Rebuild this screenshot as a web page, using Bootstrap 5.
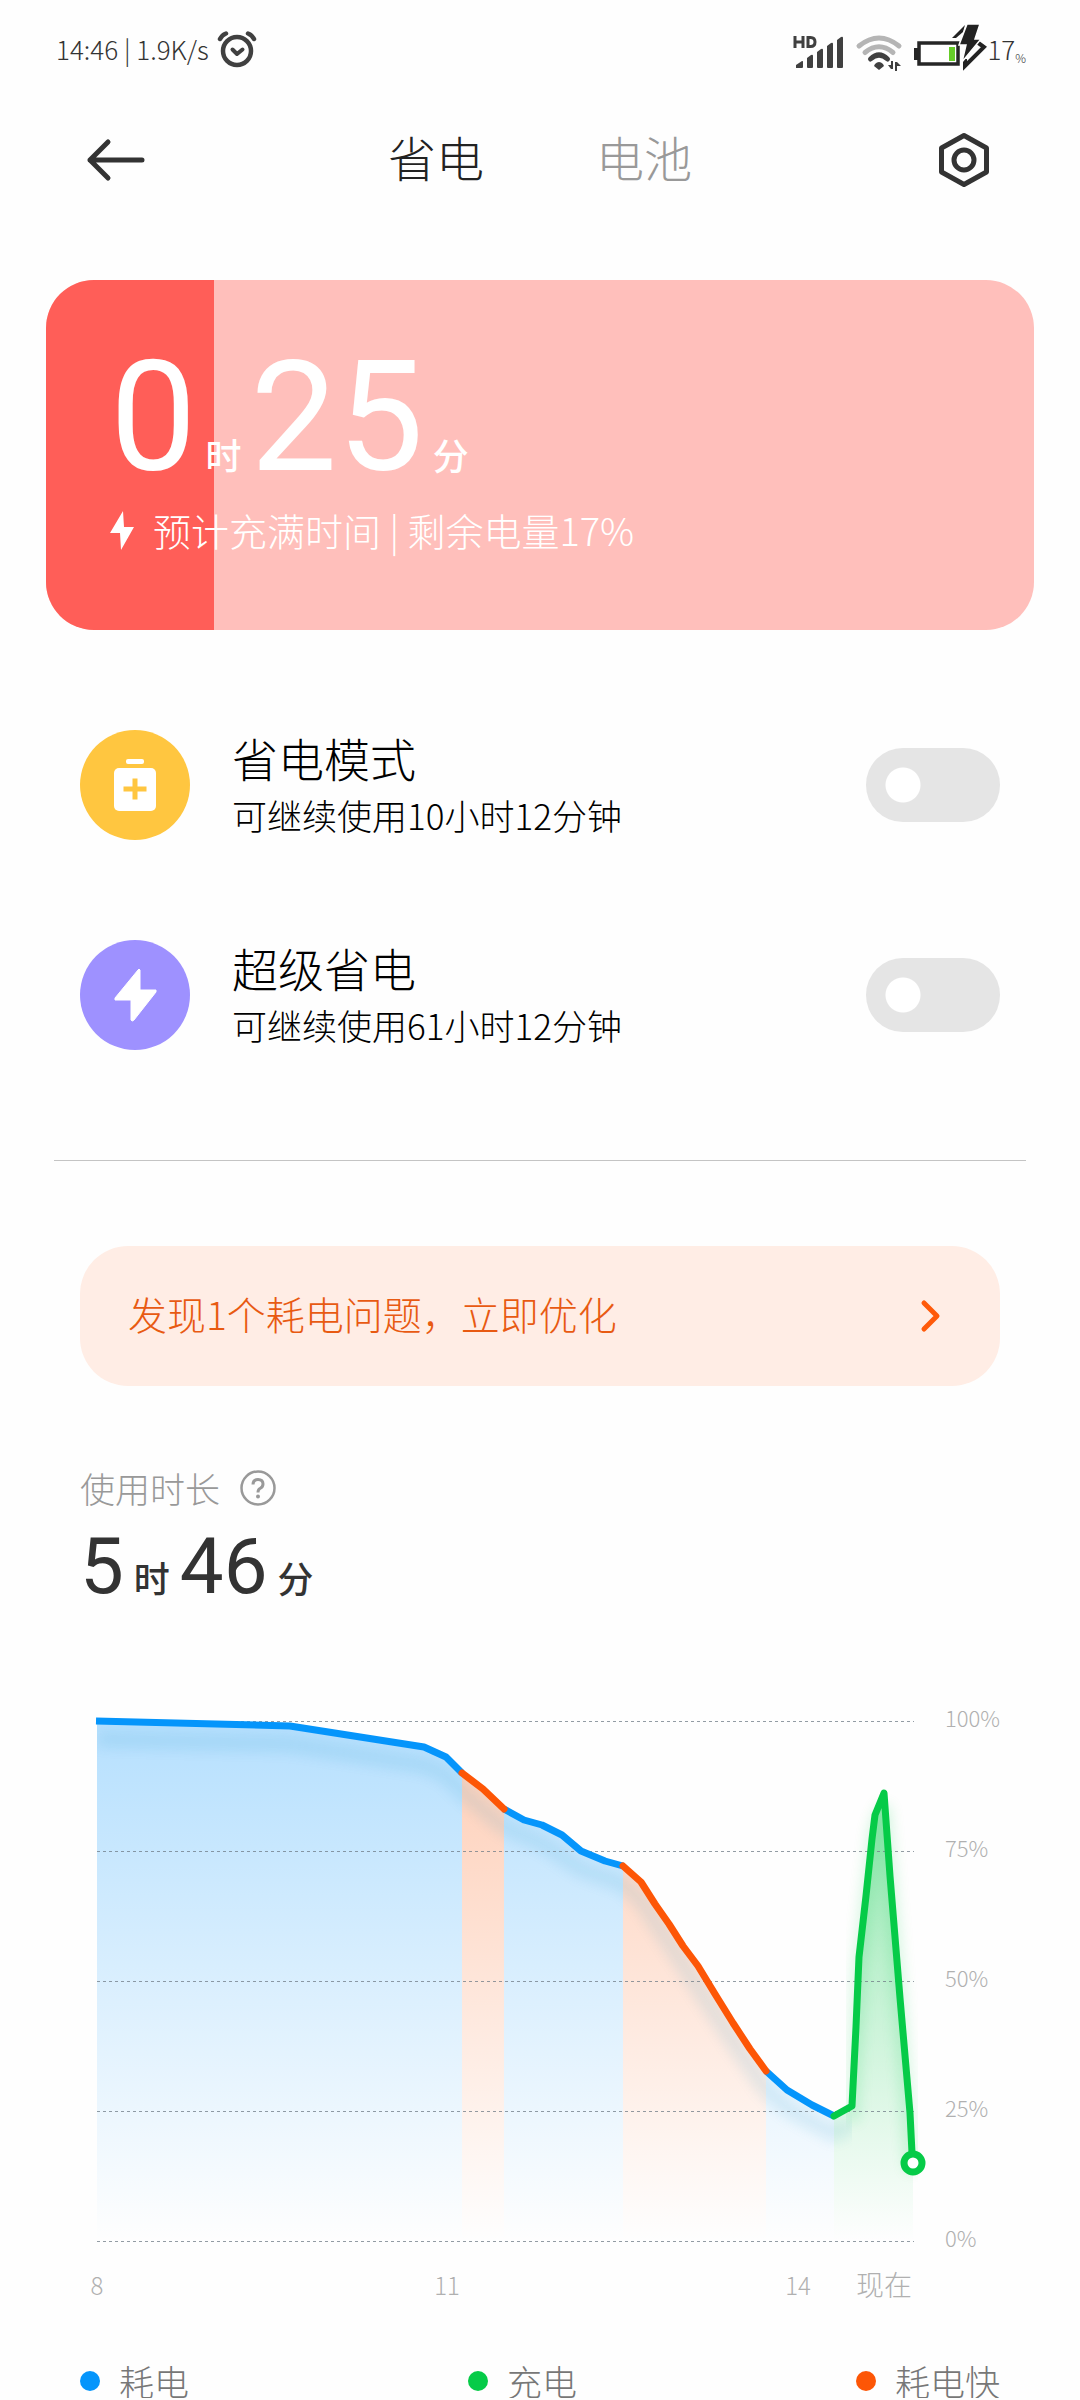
<!DOCTYPE html>
<html lang="zh-CN">
<head>
<meta charset="utf-8">
<meta name="viewport" content="width=device-width, initial-scale=1">
<title>省电</title>
<link rel="stylesheet" href="https://cdn.jsdelivr.net/npm/bootstrap@5.3.0/dist/css/bootstrap.min.css">
<style>
  body { font-family: "Noto Sans CJK SC", sans-serif; font-weight: 300; color: #111; background: #fefefe; }
  svg { display: block; flex: none; }
  .statusbar { height: 98px; padding: 0 54px 0 56px; font-size: 26px; line-height: 36px; color: #333; }
  .pct { font-size: 12px; }
  .topbar { height: 124px; padding: 0 80px; }
  .icon-btn { width: 72px; height: 72px; }
  .tabs-main { gap: 112px; font-size: 48px; line-height: 64px; padding-bottom: 8px; }
  .tabs-main a { color: #999; text-decoration: none; }
  .tabs-main a.active { color: #222; }
  .power-card { margin: 58px 46px 0; height: 350px; border-radius: 48px; background: #ffbfbb; color: #fff; }
  .power-level { background: #ff5e58; }
  .power-text { padding: 58px 64px 0; }
  .digits { font-family: Roboto, sans-serif; font-weight: 400; }
  .unit { font-size: 36px; line-height: 36px; font-weight: 500; }
  .big-time { line-height: 160px; gap: 9px; }
  .big-time .digits { font-size: 154px; }
  .power-note { font-size: 38px; line-height: 56px; gap: 19px; margin-top: 4px; }
  .mode-list { margin-top: 50px; padding: 0 80px; }
  .mode-row { height: 210px; gap: 42px; }
  .mode-icon { width: 110px; height: 110px; }
  .mode-title { font-size: 46px; line-height: 60px; color: #000; }
  .mode-sub { font-size: 35px; line-height: 56px; color: #000; }
  .form-switch .form-check-input.big-switch { width: 134px; height: 74px; margin: 0; border: 0; border-radius: 37px;
    background-color: #e5e5e5; background-image: radial-gradient(circle at 37px 37px, #fff 17px, transparent 18px);
    background-size: 100% 100%; background-position: 0 0; }
  .form-switch .form-check-input.big-switch:checked { background-color: #0d99ff;
    background-image: radial-gradient(circle at 97px 37px, #fff 17px, transparent 18px); }
  .split { margin: 60px 54px 0; border-top: 1px solid #c4c4c4; opacity: 1; }
  .tip { margin: 85px 80px 0; height: 140px; padding: 0 48px; border-radius: 48px; background: #ffede5;
    color: #e85a12; font-size: 39px; text-decoration: none; }
  .tip span { padding-bottom: 6px; }
  .usage { margin: 78px 80px 0; }
  .usage-title { font-size: 35px; line-height: 48px; gap: 20px; color: #999; }
  .usage-time { line-height: 80px; gap: 10px; margin-top: 15px; color: #333; }
  .usage-time .digits { font-size: 78px; }
  .chart { margin: 94px 80px 0; }
  .chart svg { width: 100%; height: auto; overflow: visible; }
  .chart text { font-size: 24px; fill: #b0b0b0; }
  .chart .level text { font-size: 22px; }
  .legend-row { margin: 43px 80px 0; font-size: 35px; line-height: 34px; color: #777; }
  .legend-row > div { gap: 19px; }
  .dot { width: 20px; height: 20px; }
</style>
<script src="https://cdn.jsdelivr.net/npm/bootstrap@5.3.0/dist/js/bootstrap.bundle.min.js"></script>
</head>
<body>
<div class="statusbar d-flex justify-content-between align-items-center">
  <div class="d-flex align-items-center">
    <span>14:46 | 1.9K/s</span>
    <svg class="ms-2" width="40" height="40" viewBox="0 0 40 40" fill="none" stroke="#404040" stroke-linecap="round" stroke-linejoin="round">
      <circle cx="20" cy="22" r="14" stroke-width="4.5"/><path d="M15.500 20.500l4.500 4.500 5.500-4.500" stroke-width="4"/>
      <path d="M3 10Q5 6 9 4.500M31 4.500Q35 6 37 10" stroke-width="4.500"/>
    </svg>
  </div>
  <div class="d-flex align-items-center">
    <svg width="194" height="54" viewBox="0 0 194 54">
      <path d="M2 14v12M10 14v12M2 20h8M15 15.500v9h2.500q4.500 0 4.500-4.500t-4.500-4.500z" fill="none" stroke="#404040" stroke-width="3"/>
      <g fill="#404040"><path d="M3 46v-3l6-4q1-.5 1 1v5q0 1-1 1zM14 45V36l4-3q2-1 2 1v11q0 1-1 1h-4q-1 0-1-1zM24 45V30l4-3q2-1 2 1v17q0 1-1 1h-4q-1 0-1-1zM34 45V24l4-3q2-1 2 1v23q0 1-1 1h-4q-1 0-1-1zM44 45V18l4-3q2-1 2 1v29q0 1-1 1h-4q-1 0-1-1z"/></g>
      <path d="M66 24Q86 8 106 24M72 30.500Q86 19 100 30.500" fill="none" stroke="#b5b5b5" stroke-width="5" stroke-linecap="round"/>
      <path d="M77.500 37Q86 29 94.500 37" fill="none" stroke="#404040" stroke-width="5" stroke-linecap="round"/>
      <path d="M82 42q4-4 8 0l1 2-5 4-5-4z" fill="#404040"/>
      <path d="M100 39v8h-2l-3-4h3v-4zM102 49v-9h2l4 4h-4v5z" fill="#404040"/>
      <rect x="126" y="21" width="39" height="21" fill="#fff" stroke="#262626" stroke-width="3.500"/>
      <rect x="121" y="26" width="4" height="12" fill="#262626"/><rect x="156" y="25" width="6" height="14" fill="#66cc29"/>
      <path d="M184 20l7 5-19 19v-7" fill="none" stroke="#222" stroke-width="4"/>
      <path d="M159 16l13-13-2 7-7 6z" fill="#222"/>
      <path d="M174 2h13l-5 15h6L169 40l4-17h-7z" fill="#222" stroke="#fff" stroke-width="1.500"/>
    </svg>
    <span>17</span><span class="pct align-self-end">%</span>
  </div>
</div>

<header class="topbar d-flex justify-content-between align-items-center">
  <button type="button" class="btn icon-btn p-0 border-0 d-flex align-items-center justify-content-center" aria-label="返回">
    <svg width="60" height="44" viewBox="0 0 60 44" fill="none" stroke="#333" stroke-width="5" stroke-linecap="round" stroke-linejoin="round"><path d="M56 22H4M22 4L4 22l18 18"/></svg>
  </button>
  <nav class="tabs-main d-flex"><a href="#" class="active">省电</a><a href="#">电池</a></nav>
  <button type="button" class="btn icon-btn p-0 border-0 d-flex align-items-center justify-content-center" aria-label="设置">
    <svg width="54" height="56" viewBox="0 0 54 56" fill="none" stroke="#333" stroke-width="5" stroke-linejoin="round"><path d="M27 3.500L49.500 16v24L27 52.500 4.500 40V16z"/><circle cx="27" cy="28" r="10"/></svg>
  </button>
</header>

<main>
  <section class="power-card position-relative overflow-hidden">
    <div class="power-level position-absolute top-0 start-0 h-100" style="width:17%"></div>
    <div class="power-text position-relative">
      <div class="big-time d-flex align-items-baseline">
        <span class="digits">0</span><span class="unit">时</span><span class="digits">25</span><span class="unit">分</span>
      </div>
      <div class="power-note d-flex align-items-center">
        <svg width="24" height="40" viewBox="0 0 24 40"><path d="M13 1L0 23h10l1 17 13-23H14z" fill="#fff"/></svg>
        <span>预计充满时间 | 剩余电量17%</span>
      </div>
    </div>
  </section>

  <section class="mode-list">
    <div class="mode-row d-flex align-items-center">
      <svg class="mode-icon" viewBox="0 0 110 110"><circle cx="55" cy="55" r="55" fill="#ffc640"/><rect x="46" y="29" width="18" height="5" rx="2" fill="#fff"/><rect x="34" y="38" width="42" height="43" rx="5" fill="#fff"/><path d="M55 48.500v21M43.500 59h23" stroke="#ffc640" stroke-width="5"/></svg>
      <label class="flex-grow-1" for="saver"><span class="mode-title d-block">省电模式</span><span class="mode-sub d-block">可继续使用10小时12分钟</span></label>
      <div class="form-check form-switch p-0 m-0"><input class="form-check-input big-switch float-none d-block" type="checkbox" role="switch" id="saver"></div>
    </div>
    <div class="mode-row d-flex align-items-center">
      <svg class="mode-icon" viewBox="0 0 110 110"><circle cx="55" cy="55" r="55" fill="#9e91ff"/><path d="M58 30L35 58v2h16v20q1 2 3 0l22-28v-2H60V30q-1-2-2 0z" fill="#fff" stroke="#fff" stroke-linejoin="round"/></svg>
      <label class="flex-grow-1" for="ultra"><span class="mode-title d-block">超级省电</span><span class="mode-sub d-block">可继续使用61小时12分钟</span></label>
      <div class="form-check form-switch p-0 m-0"><input class="form-check-input big-switch float-none d-block" type="checkbox" role="switch" id="ultra"></div>
    </div>
  </section>

  <hr class="split">

  <a href="#" class="tip d-flex justify-content-between align-items-center">
    <span>发现1个耗电问题，立即优化</span>
    <svg width="44" height="34" viewBox="0 0 44 34" fill="none" stroke="#ff5a0a" stroke-width="5" stroke-linecap="round" stroke-linejoin="round"><path d="M16 4l13 13-13 13"/></svg>
  </a>

  <section class="usage">
    <div class="usage-title d-flex align-items-center">
      <span>使用时长</span>
      <svg width="36" height="36" viewBox="0 0 36 36" fill="none" stroke="#999" stroke-width="2.500"><circle cx="18" cy="18" r="16.500"/><path d="M13 14.500q0-5 5-5t5 4.500q0 3-3 4.500-2 1-2 4" stroke-width="3"/><circle cx="18" cy="26.500" r="2" fill="#999" stroke="none"/></svg>
    </div>
    <div class="usage-time d-flex align-items-baseline">
      <span class="digits">5</span><span class="unit">时</span><span class="digits">46</span><span class="unit">分</span>
    </div>
  </section>

  <section class="chart">
    <svg viewBox="0 0 920 620" role="img" aria-label="电量曲线">
      <defs>
        <linearGradient id="gb" gradientUnits="userSpaceOnUse" x1="0" y1="0" x2="0" y2="520"><stop offset="0" stop-color="#0d99ff" stop-opacity=".3"/><stop offset="1" stop-color="#0d99ff" stop-opacity="0"/></linearGradient>
        <linearGradient id="go" gradientUnits="userSpaceOnUse" x1="0" y1="0" x2="0" y2="520"><stop offset="0" stop-color="#ff5a0a" stop-opacity=".3"/><stop offset="1" stop-color="#ff5a0a" stop-opacity="0"/></linearGradient>
        <linearGradient id="gg" gradientUnits="userSpaceOnUse" x1="0" y1="72" x2="0" y2="520"><stop offset="0" stop-color="#06cb48" stop-opacity=".42"/><stop offset="1" stop-color="#06cb48" stop-opacity="0"/></linearGradient>
        <filter id="soft" x="-10%" y="-10%" width="120%" height="130%"><feGaussianBlur stdDeviation="7"/></filter>
        <clipPath id="under"><path d="M0 0L193 5 327 26 349 36 365 52 386 68 407 88 427 99 445 104 465 114 484 130 508 140 526 145 544 161 586 225 636 302 669 350 690 369 715 384 737 395 755 385V540H0z"/></clipPath>
      </defs>
      <g transform="translate(17 20)">
        <path d="M0 0L193 5 327 26 349 36 365 52V520H0z" fill="url(#gb)"/>
        <path d="M365 52L386 68 407 88V520H365z" fill="url(#go)"/>
        <path d="M407 88L427 99 445 104 465 114 484 130 508 140 526 145V520H407z" fill="url(#gb)"/>
        <path d="M526 145L544 161 558 183 572 203 586 225 601 245 618 273 636 302 653 328 669 350V520H526z" fill="url(#go)"/>
        <path d="M669 350L690 369 715 384 737 395V520H669z" fill="url(#gb)"/>
        <path d="M737 395L755 385 759 306 762 236 769 175 775 118 778 94 787 72 793 155 803 277 813 392 816 442V520H737z" fill="url(#gg)"/>
        <g clip-path="url(#under)"><path d="M0 18L193 23 327 44 349 54 365 70 407 106 445 122 484 148 526 163 544 179 586 243 636 320 669 368 690 387 737 413 755 403" fill="none" stroke="#0a8fc0" stroke-width="14" opacity=".13" filter="url(#soft)"/></g>
        <path d="M755 400L762 250 778 108 787 85 803 290 815 450" fill="none" stroke="#06cb48" stroke-width="12" opacity=".18" filter="url(#soft)"/>
        <g stroke="#6f7b85" stroke-opacity=".75" stroke-dasharray="3 3"><path d="M0 .5H817M0 130.500H817M0 260.500H817M0 390.500H817M0 520.500H817"/></g>
        <g fill="none" stroke-width="7" stroke-linejoin="round">
          <g stroke="#0595fb"><path d="M-1 0L193 5 327 26 349 36 365 52"/><path d="M407 88L427 99 445 104 465 114 484 130 508 140 526 145"/><path d="M669 350L690 369 715 384 737 395"/></g>
          <path stroke="#fd5606" stroke-linecap="round" d="M365 52L386 68 407 88M526 145L544 161 558 183 572 203 586 225 601 245 618 273 636 302 653 328 669 350"/>
          <path stroke="#06cb48" stroke-linecap="round" d="M737 395L755 385 759 306 762 236 769 175 775 118 778 94 787 72 793 155 803 277 813 392 815 432"/>
          <circle cx="816" cy="442" r="9" fill="#fff" stroke="#06cb48"/>
        </g>
        <g class="level"><text x="848" y="6">100%</text><text x="848" y="136">75%</text><text x="848" y="266">50%</text><text x="848" y="396">25%</text><text x="848" y="526">0%</text></g>
        <g text-anchor="middle"><text x="0" y="574">8</text><text x="350" y="574">11</text><text x="701" y="574">14</text></g>
        <text x="815" y="575" text-anchor="end" style="font-size:28px">现在</text>
      </g>
    </svg>
  </section>

  <div class="legend-row d-flex justify-content-between">
    <div class="d-flex align-items-center"><span class="dot rounded-circle" style="background:#0595fb"></span>耗电</div>
    <div class="d-flex align-items-center"><span class="dot rounded-circle" style="background:#06cb48"></span>充电</div>
    <div class="d-flex align-items-center"><span class="dot rounded-circle" style="background:#fd5606"></span>耗电快</div>
  </div>
</main>
</body>
</html>
